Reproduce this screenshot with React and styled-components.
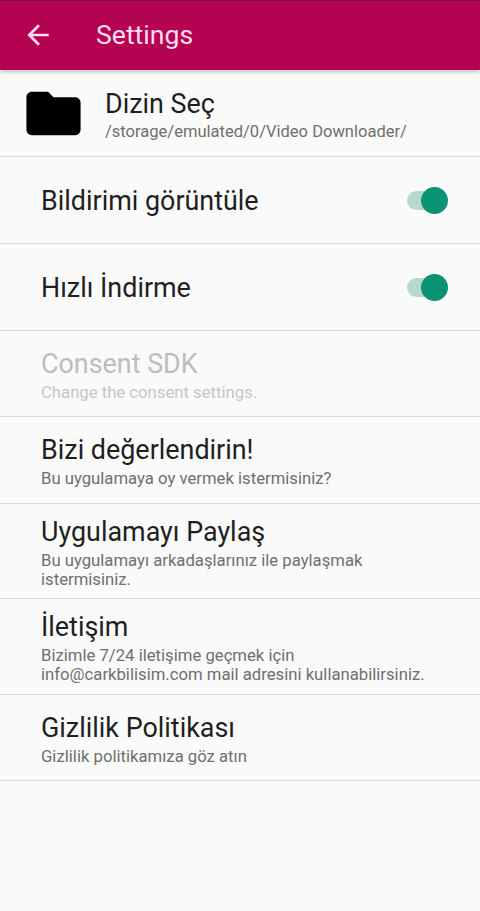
import React from 'react';
import styled, { createGlobalStyle } from 'styled-components';

const GlobalStyle = createGlobalStyle`
    html, body {
        margin: 0;
        padding: 0;
        background: #fafafa;
        font-family: Roboto, "Noto Sans", sans-serif;
    }
`;

const settings = [
    { id: 'notify', title: 'Bildirimi görüntüle', toggle: true, height: 87 },
    { id: 'fast', title: 'Hızlı İndirme', toggle: true, height: 87 },
    { id: 'consent', title: 'Consent SDK', desc: 'Change the consent settings.', disabled: true, height: 86 },
    { id: 'rate', title: 'Bizi değerlendirin!', desc: 'Bu uygulamaya oy vermek istermisiniz?', height: 87 },
    { id: 'share', title: 'Uygulamayı Paylaş', desc: 'Bu uygulamayı arkadaşlarınız ile paylaşmak istermisiniz.', height: 95 },
    { id: 'contact', title: 'İletişim', desc: 'Bizimle 7/24 iletişime geçmek için info@carkbilisim.com mail adresini kullanabilirsiniz.', height: 96 },
    { id: 'privacy', title: 'Gizlilik Politikası', desc: 'Gizlilik politikamıza göz atın', height: 86 },
];

export default function App() {
    return (
        <Screen>
            <GlobalStyle />
            <AppBar>
                <BackButton>
                    <svg width="32" height="32" viewBox="0 0 24 24" fill="#ffdcef">
                        <path d="M20 11H7.83l5.59-5.59L12 4l-8 8 8 8 1.41-1.41L7.83 13H20v-2z" />
                    </svg>
                </BackButton>
                <BarTitle>Settings</BarTitle>
            </AppBar>
            <FolderRow>
                <svg width="65" height="65" viewBox="0 0 24 24" fill="#000">
                    <path d="M10 4H4c-1.1 0-2 .9-2 2v12c0 1.1.9 2 2 2h16c1.1 0 2-.9 2-2V8c0-1.1-.9-2-2-2h-8l-2-2z" />
                </svg>
                <FolderText>
                    <Title>Dizin Seç</Title>
                    <FolderPath>/storage/emulated/0/Video Downloader/</FolderPath>
                </FolderText>
            </FolderRow>
            {settings.map(item => (
                <Row key={item.id} $height={item.height} $hasDesc={!!item.desc}>
                    <RowText>
                        <Title $disabled={item.disabled}>{item.title}</Title>
                        {item.desc && <Desc $disabled={item.disabled}>{item.desc}</Desc>}
                    </RowText>
                    {item.toggle && (
                        <Toggle>
                            <Knob />
                        </Toggle>
                    )}
                </Row>
            ))}
        </Screen>
    );
}

const Screen = styled.div`
    width: 480px;
    min-height: 911px;
    background: #fafafa;
    overflow: hidden;
`;

const AppBar = styled.header`
    display: flex;
    align-items: center;
    height: 70px;
    box-sizing: border-box;
    background: #b30351;
    border-top: 1px solid #8c0a44;
    box-shadow: 0 2px 4px rgba(0, 0, 0, 0.22);
    padding: 0 0 2px 22px;
`;

const BackButton = styled.div`
    display: flex;
    width: 32px;
    height: 32px;
    margin-right: 42px;
`;

const BarTitle = styled.div`
    color: #ffdcef;
    font-size: 26.6px;
`;

const FolderRow = styled.div`
    display: flex;
    align-items: center;
    height: 87px;
    box-sizing: border-box;
    border-bottom: 1px solid #d9d9d9;
    padding-left: 21px;
    gap: 19px;
`;

const FolderText = styled.div`
    display: flex;
    flex-direction: column;
    padding-top: 3px;
`;

const Row = styled.div`
    display: flex;
    align-items: center;
    justify-content: space-between;
    height: ${props => props.$height}px;
    box-sizing: border-box;
    border-bottom: 1px solid #d9d9d9;
    padding: ${props => (props.$hasDesc ? 2 : 1)}px 35px 0 41px;
`;

const RowText = styled.div`
    display: flex;
    flex-direction: column;
    max-width: 390px;
`;

const Title = styled.div`
    color: ${props => (props.$disabled ? '#bdbdbd' : '#1f1f1f')};
    font-size: 26.9px;
    line-height: 32px;
`;

const Desc = styled.div`
    color: ${props => (props.$disabled ? '#c6c6c6' : '#6f6f6f')};
    font-size: 16.7px;
    line-height: 19px;
    margin-top: 3px;
`;

const FolderPath = styled.div`
    color: #6f6f6f;
    font-size: 16.55px;
    line-height: 20px;
    margin-top: 2px;
`;

const Toggle = styled.div`
    position: relative;
    width: 38px;
    height: 19px;
    border-radius: 10px;
    background: #b5d9d0;
`;

const Knob = styled.div`
    position: absolute;
    top: -4px;
    right: -3px;
    width: 27px;
    height: 27px;
    border-radius: 50%;
    background: #0b9473;
`;
